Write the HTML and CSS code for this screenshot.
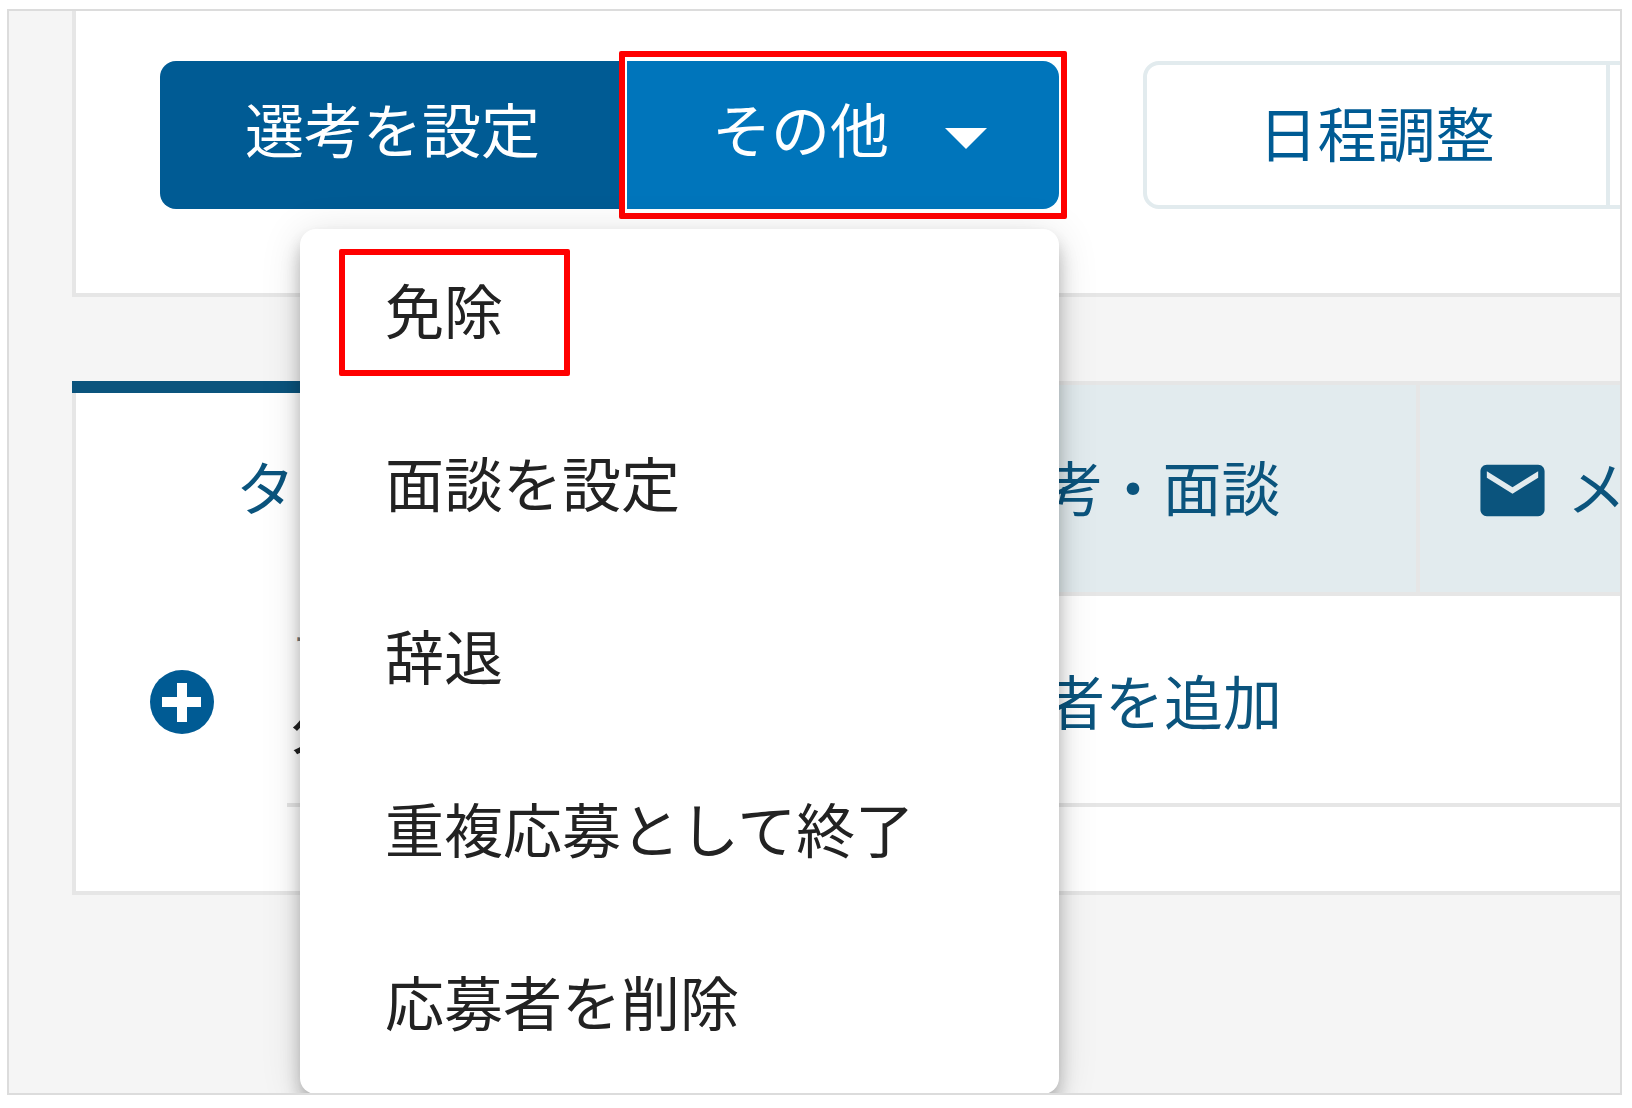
FILE: index.html
```html
<!DOCTYPE html>
<html lang="ja">
<head>
    <meta charset="UTF-8">
    <meta name="viewport" content="width=device-width, initial-scale=1.0">
    <title>応募者詳細</title>
    <link rel="stylesheet" href="styles.css">
</head>
<body>

<div class="frame">
    <!-- Action buttons -->
    <div class="card actions">
        <div class="split-button">
            <button type="button" class="btn btn-main">選考を設定</button>
            <button type="button" class="btn btn-more marked" aria-haspopup="menu" aria-expanded="true">
                <span>その他</span>
                <svg class="caret" viewBox="0 0 42 21"><path d="M0 0h42L21 21z" fill="currentColor"/></svg>
            </button>

            <div class="menu" role="menu">
                <button type="button" class="menu-item marked" role="menuitem">免除</button>
                <button type="button" class="menu-item" role="menuitem">面談を設定</button>
                <button type="button" class="menu-item" role="menuitem">辞退</button>
                <button type="button" class="menu-item" role="menuitem">重複応募として終了</button>
                <button type="button" class="menu-item" role="menuitem">応募者を削除</button>
            </div>
        </div>

        <div class="outline-group">
            <button type="button" class="btn-outline">日程調整</button>
            <button type="button" class="btn-outline" aria-label="その他の操作"></button>
        </div>
    </div>

    <!-- Timeline / interviews / mail -->
    <div class="card panel">
        <div class="tabs">
            <a href="#timeline" class="tab active">タイムライン</a>
            <a href="#interview" class="tab tab-interview">選考・面談</a>
            <a href="#mail" class="tab tab-mail">
                <svg class="mail-icon" viewBox="0 0 24 24"><path fill="currentColor" d="M20 4H4c-1.1 0-1.99.9-1.99 2L2 18c0 1.1.9 2 2 2h16c1.1 0 2-.9 2-2V6c0-1.1-.9-2-2-2zm0 4l-8 5-8-5V6l8 5 8-5v2z"/></svg>
                メール
            </a>
        </div>
        <div class="row">
            <button type="button" class="add" aria-label="追加">
                <svg viewBox="0 0 64 64"><circle cx="32" cy="32" r="32" fill="#005b94"/><path d="M32 13v39M12 32h39" stroke="#fff" stroke-width="10"/></svg>
            </button>
            <div class="field">
                <div class="field-value">
                    <span class="field-label">ファイル</span>
                    <span>久保</span>
                </div>
                <a href="#evaluator" class="add-link">評価者を追加</a>
            </div>
        </div>
    </div>
</div>

</body>
</html>
```
FILE: styles.css
```css
*,
*::after {
    box-sizing: border-box;
}

body {
    margin: 0;
    padding: 9px 10px 13px 7px;
    background: #fff;
    color: #222;
    font-family: "Noto Sans CJK JP", sans-serif;
    font-size: 59px;
    line-height: 80px;
}

button {
    margin: 0;
    padding: 0;
    border: none;
    background: none;
    color: inherit;
    font: inherit;
    cursor: pointer;
}

a {
    color: #0b547d;
    text-decoration: none;
}

svg {
    display: block;
}

.frame {
    min-height: calc(100vh - 22px);
    padding-left: 63px;
    border: 2px solid #dcdcdc;
    background: #f5f5f5;
    overflow: hidden;
}

.card {
    border-left: 4px solid #e6e6e6;
    border-bottom: 4px solid #e6e6e6;
    background: #fff;
    white-space: nowrap;
}

.actions {
    display: flex;
    gap: 84px;
    padding: 50px 0 84px 84px;
}

.split-button {
    position: relative;
    display: flex;
    flex-shrink: 0;
    gap: 2px;
}

.btn {
    display: flex;
    align-items: center;
    height: 148px;
    padding: 0 85px 14px;
    color: #fff;
}

.btn-main {
    border-radius: 16px 0 0 16px;
    background: #005b94;
}

.btn-more {
    gap: 56px;
    padding-right: 72px;
    border-radius: 0 16px 16px 0;
    background: #0075bb;
}

.caret {
    width: 42px;
    height: 21px;
    margin-top: 20px;
}

/* Red highlight */
.marked {
    position: relative;
}

.marked::after {
    content: "";
    position: absolute;
    border: 6px solid #f00;
    border-radius: 2px;
}

.btn-more.marked::after {
    inset: -10px -8px;
}

.menu-item.marked::after {
    top: 20px;
    left: 39px;
    width: 231px;
    height: 127px;
}

.menu {
    position: absolute;
    top: 168px;
    right: 0;
    z-index: 1;
    width: 759px;
    border-radius: 16px;
    background: #fff;
    box-shadow: 0 8px 17px -4px rgba(0, 0, 0, 0.2), 0 17px 21px rgba(0, 0, 0, 0.14), 0 4px 42px rgba(0, 0, 0, 0.12);
}

.menu-item {
    display: block;
    width: 100%;
    height: 173px;
    padding: 0 85px 14px;
    text-align: left;
}

.outline-group {
    display: flex;
    flex-shrink: 0;
    height: 148px;
    border: 4px solid #e2ebee;
    border-radius: 16px;
}

.btn-outline {
    width: 463px;
    padding-bottom: 6px;
    border-right: 4px solid #e2ebee;
    color: #005b94;
}

.panel {
    margin-top: 84px;
    border-left: none;
}

.tabs {
    display: flex;
}

.tab {
    display: flex;
    flex: 0 0 674px;
    align-items: center;
    justify-content: center;
    height: 215px;
    padding-bottom: 6px;
    border-top: 4px solid #e6e6e6;
    border-right: 4px solid #e6e6e6;
    border-bottom: 4px solid #e6e6e6;
    background: #e2ebee;
}

.tab.active {
    padding: 0 0 18px 4px;
    border: none;
    border-top: 12px solid #0b547d;
    background: #fff;
    box-shadow: inset 4px 0 #e6e6e6;
}

.tab-interview {
    padding-left: 104px;
}

.tab-mail {
    justify-content: flex-start;
    gap: 16px;
    padding-left: 54px;
}

.mail-icon {
    width: 77px;
    height: 77px;
    margin-top: 10px;
}

.row {
    display: flex;
    padding: 0 0 84px 74px;
    border-left: 4px solid #e6e6e6;
}

.add {
    width: 64px;
    height: 64px;
    margin-top: 74px;
}

.field {
    display: flex;
    flex: 1;
    align-items: center;
    gap: 500px;
    height: 211px;
    margin-left: 73px;
    border-bottom: 4px solid #e6e6e6;
}

.field-value {
    display: flex;
    flex-direction: column;
    width: 141px;
    padding: 0 0 20px 4px;
}

.field-label {
    color: #777;
    font-size: 44px;
    line-height: 68px;
}
```
